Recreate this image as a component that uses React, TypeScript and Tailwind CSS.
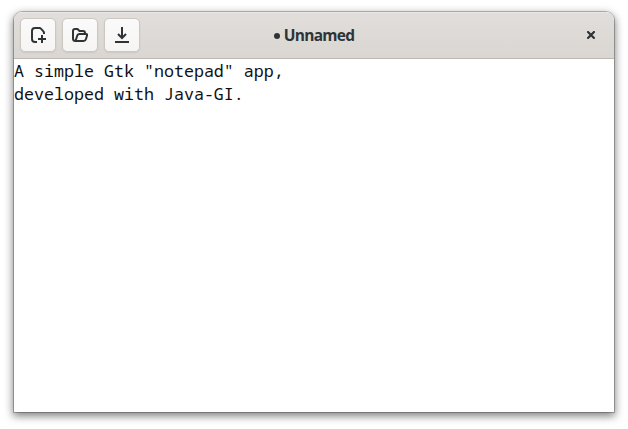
export default function App() {
  const buttonClass = 'flex h-[34px] w-9 items-center justify-center rounded-[5px] border border-[#cdc7c2] bg-gradient-to-t from-[#f6f5f4] to-[#fbfafa] shadow-[0_1px_2px_rgba(0,0,0,0.07)]';
  const iconProps = { width: 16, height: 16, viewBox: '0 0 16 16', fill: 'none', stroke: 'currentColor', strokeWidth: 2 };
  return (
    <div className="h-[429px] w-[628px] overflow-hidden bg-white px-3.5 pt-3">
      <div className="flex h-[400px] w-[600px] flex-col overflow-hidden rounded-t-lg bg-white shadow-[0_0_0_1px_rgba(0,0,0,0.23),0_3px_9px_1px_rgba(0,0,0,0.5)]">
        <header className="grid h-[47px] shrink-0 grid-cols-[1fr_auto_1fr] items-center border-b border-[#bfb8b1] bg-gradient-to-t from-[#dad6d2] to-[#e1dedb] px-1.5 text-[#2e3436] shadow-[inset_0_1px_rgba(255,255,255,0.3)]">
          <div className="flex gap-1.5">
            <button aria-label="New" className={buttonClass}>
              <svg {...iconProps}>
                <path d="M7 15H5Q2 15 2 12V4Q2 1 5 1H9.500Q10.300 1 10.900 1.600L13.400 4.300Q14 5 14 6V7M12 8V16M8 12H16" />
              </svg>
            </button>
            <button aria-label="Open" className={buttonClass}>
              <svg {...iconProps} strokeLinejoin="round">
                <path d="M3.500 14Q1 14 1 11.500V4Q1 2 3 2H5.500L7.500 4H11Q13 4 13 6M3.500 14L5.300 8.500Q6 7 7.500 7H14Q15.500 7 15 8.500L14 12Q13.400 14 11.500 14Z" />
              </svg>
            </button>
            <button aria-label="Save" className={buttonClass}>
              <svg {...iconProps}>
                <path d="M8 0V11M4 7L8 11L12 7M1 15H15" />
              </svg>
            </button>
          </div>
          <h1 className="flex items-center gap-1 pt-px font-['Open_Sans',sans-serif] text-[15.5px] font-bold leading-none tracking-[-0.75px]">
            <span className="size-1.5 rounded-full bg-current" />
            Unnamed
          </h1>
          <button aria-label="Close" className="mr-[13px] justify-self-end">
            <svg width="8" height="8" viewBox="0 0 8 8" fill="none" stroke="currentColor" strokeWidth="2.2">
              <path d="M.3 .3L7.700 7.700M7.700 .3L.3 7.700" />
            </svg>
          </button>
        </header>
        <main className="whitespace-pre font-['Noto_Sans_Mono','DejaVu_Sans_Mono',monospace] text-[16.67px] leading-[23px] text-[#101010]">{'A simple Gtk "notepad" app,\ndeveloped with Java-GI.'}</main>
      </div>
    </div>
  );
}
